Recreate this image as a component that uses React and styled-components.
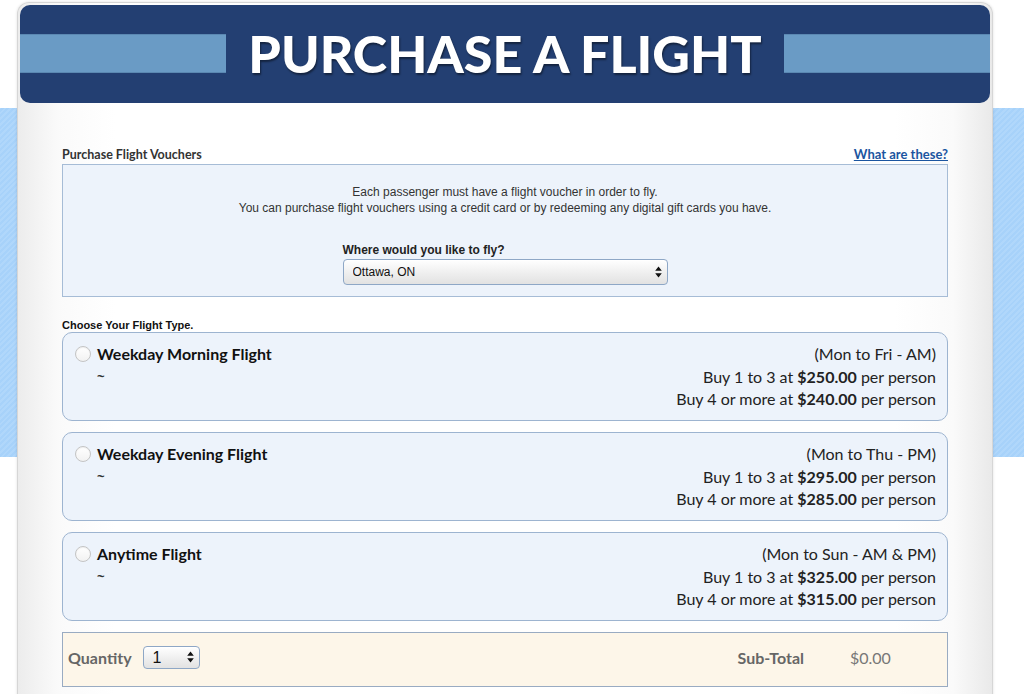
import styled, { createGlobalStyle } from 'styled-components';

const GlobalStyle = createGlobalStyle`
  html, body {
    margin: 0;
    padding: 0;
    background: #fff;
  }
  body {
    font-family: 'Liberation Sans', Arial, sans-serif;
    color: #222;
  }
`;

const Page = styled.div`
  min-height: 694px;
  padding-top: 2px;
  background-color: #fff;
  background-image: repeating-linear-gradient(
    -45deg,
    #a7d2fa 0,
    #a7d2fa 2px,
    #b0d7fb 2px,
    #b0d7fb 4px
  );
  background-size: 100% 349px;
  background-position: 0 108px;
  background-repeat: no-repeat;
  overflow: hidden;
`;

const Panel = styled.div`
  margin-left: 17px;
  width: 970px;
  min-height: 720px;
  padding: 2px 2px 0;
  border: 1px solid #d6d6d6;
  border-bottom: none;
  border-radius: 12px 12px 0 0;
  background: linear-gradient(to right, #ececec 0, #fafafa 4%, #fff 10%, #fff 90%, #fafafa 96%, #e9e9e9 100%);
  box-shadow: 0 0 3px rgba(0, 0, 0, 0.12);
`;

const Banner = styled.header`
  height: 98px;
  background: #233f72;
  border-radius: 10px;
  display: flex;
  align-items: center;
  gap: 22px;
`;

const BannerStripe = styled.div`
  flex: 1;
  height: 37px;
  background: #6a9bc5;
  border-top: 1px solid #5b88b2;
  border-bottom: 1px solid #5b88b2;
  align-self: flex-start;
  margin-top: 29px;
`;

const BannerTitle = styled.h1`
  margin: 0;
  font-family: Lato, 'Noto Sans', sans-serif;
  font-weight: 900;
  font-size: 52px;
  letter-spacing: 0;
  color: #fff;
  text-shadow: 1px 2px 2px rgba(0, 0, 0, 0.45);
  line-height: 1;
  padding-bottom: 2px;
`;

const Content = styled.main`
  padding: 42px 42px 0;
`;

const SectionHead = styled.div`
  display: flex;
  justify-content: space-between;
  align-items: flex-end;
  height: 17px;
`;

const SectionTitle = styled.h2`
  margin: 0;
  font-family: Lato, 'Noto Sans', sans-serif;
  font-weight: 700;
  font-size: 12.5px;
  color: #333;
`;

const HelpLink = styled.a`
  font-family: Lato, 'Noto Sans', sans-serif;
  font-weight: 700;
  font-size: 13px;
  color: #1b55a0;
  text-decoration: underline;
`;

const InfoBox = styled.section`
  margin-top: 2px;
  height: 133px;
  box-sizing: border-box;
  padding: 19px 0 0;
  background: #edf3fb;
  border: 1px solid #a6bcd6;
  display: flex;
  flex-direction: column;
  align-items: center;
`;

const InfoText = styled.p`
  margin: 0;
  font-size: 12px;
  line-height: 16px;
  color: #333;
  text-align: center;
`;

const Field = styled.div`
  margin-top: 27px;
  width: 325px;
`;

const FieldLabel = styled.label`
  display: block;
  font-size: 12px;
  font-weight: 700;
  color: #222;
  line-height: 14px;
  margin-bottom: 2px;
`;

const SelectWrap = styled.div`
  position: relative;
  width: ${(p) => p.$width}px;
`;

const Select = styled.select`
  appearance: none;
  width: 100%;
  height: ${(p) => p.$height}px;
  box-sizing: border-box;
  padding: 0 0 0 ${(p) => p.$pad}px;
  border: 1px solid #8ea7c6;
  border-radius: 4px;
  background: linear-gradient(#ffffff, #ededed 60%, #e2e2e2);
  box-shadow: inset 0 1px 0 #fff;
  font-family: ${(p) => p.$font};
  font-size: ${(p) => p.$size}px;
  color: #111;
  outline: none;
`;

const Arrows = styled.svg`
  position: absolute;
  right: ${(p) => p.$right}px;
  top: 50%;
  transform: translateY(-50%);
  pointer-events: none;
`;

const ChooseLabel = styled.div`
  margin-top: 22px;
  font-size: 11px;
  font-weight: 700;
  color: #111;
  line-height: 13px;
`;

const CardList = styled.div`
  display: flex;
  flex-direction: column;
  gap: 11px;
`;

const Card = styled.label`
  display: flex;
  justify-content: space-between;
  height: 89px;
  box-sizing: border-box;
  padding: 10px 11px 0 12px;
  background: #edf3fb;
  border: 1px solid #9db4d0;
  border-radius: 10px;
  font-family: Lato, 'Noto Sans', sans-serif;
  font-size: 16px;
  color: #222;
`;

const CardLeft = styled.div`
  display: flex;
  gap: 6px;
`;

const Radio = styled.span`
  width: 16px;
  height: 16px;
  margin-top: 3px;
  box-sizing: border-box;
  border-radius: 50%;
  border: 1px solid #c4c4c4;
  background: linear-gradient(#ffffff, #f2f2f2);
  box-shadow: inset 0 1px 1px rgba(0, 0, 0, 0.06);
`;

const CardTitle = styled.div`
  font-weight: 700;
  color: #111;
  line-height: 22px;
`;

const Tilde = styled.div`
  font-family: 'Liberation Sans', Arial, sans-serif;
  font-size: 13px;
  font-weight: 700;
  line-height: 24px;
  color: #333;
`;

const Prices = styled.div`
  text-align: right;
  line-height: 22.5px;
`;

const QuantityBar = styled.section`
  margin-top: 11px;
  height: 55px;
  box-sizing: border-box;
  padding: 0 0 5px 5px;
  display: flex;
  align-items: center;
  background: #fdf6e9;
  border: 1px solid #99abc2;
  font-family: Lato, 'Noto Sans', sans-serif;
  font-size: 16px;
  color: #666;
`;

const BarLabel = styled.span`
  font-weight: 700;
  margin-right: ${(p) => p.$gap || 0}px;
`;

const Spacer = styled.div`
  flex: 1;
`;

const Amount = styled.span`
  width: 97px;
  color: #777;
`;

const UpDown = ({ right }) => (
  <Arrows $right={right} width="7" height="12" viewBox="0 0 7 12">
    <path d="M3.5 0.5 L6.8 4.8 H0.2 Z M3.5 11.5 L6.8 7.2 H0.2 Z" fill="#111" />
  </Arrows>
);

const flights = [
  { name: 'Weekday Morning Flight', days: '(Mon to Fri - AM)', low: '$250.00', high: '$240.00' },
  { name: 'Weekday Evening Flight', days: '(Mon to Thu - PM)', low: '$295.00', high: '$285.00' },
  { name: 'Anytime Flight', days: '(Mon to Sun - AM & PM)', low: '$325.00', high: '$315.00' },
];

export default function App() {
  return (
    <>
      <GlobalStyle />
      <Page>
        <Panel>
          <Banner>
            <BannerStripe />
            <BannerTitle>PURCHASE A FLIGHT</BannerTitle>
            <BannerStripe />
          </Banner>
          <Content>
            <SectionHead>
              <SectionTitle>Purchase Flight Vouchers</SectionTitle>
              <HelpLink href="#">What are these?</HelpLink>
            </SectionHead>
            <InfoBox>
              <InfoText>Each passenger must have a flight voucher in order to fly.</InfoText>
              <InfoText>
                You can purchase flight vouchers using a credit card or by redeeming any digital gift cards you have.
              </InfoText>
              <Field>
                <FieldLabel>Where would you like to fly?</FieldLabel>
                <SelectWrap $width={325}>
                  <Select $height={26} $pad={9} $size={12} $font="'Liberation Sans', Arial, sans-serif" defaultValue="ottawa">
                    <option value="ottawa">Ottawa, ON</option>
                  </Select>
                  <UpDown right={6} />
                </SelectWrap>
              </Field>
            </InfoBox>

            <ChooseLabel>Choose Your Flight Type.</ChooseLabel>
            <CardList>
              {flights.map((f) => (
                <Card key={f.name}>
                  <CardLeft>
                    <Radio />
                    <div>
                      <CardTitle>{f.name}</CardTitle>
                      <Tilde>~</Tilde>
                    </div>
                  </CardLeft>
                  <Prices>
                    <div>{f.days}</div>
                    <div>
                      Buy 1 to 3 at <b>{f.low}</b> per person
                    </div>
                    <div>
                      Buy 4 or more at <b>{f.high}</b> per person
                    </div>
                  </Prices>
                </Card>
              ))}
            </CardList>

            <QuantityBar>
              <BarLabel $gap={11}>Quantity</BarLabel>
              <SelectWrap $width={57}>
                <Select $height={23} $pad={9} $size={16} $font="'Liberation Sans', Arial, sans-serif" defaultValue="1">
                  <option value="1">1</option>
                </Select>
                <UpDown right={6} />
              </SelectWrap>
              <Spacer />
              <BarLabel $gap={46}>Sub-Total</BarLabel>
              <Amount>$0.00</Amount>
            </QuantityBar>
          </Content>
        </Panel>
      </Page>
    </>
  );
}
